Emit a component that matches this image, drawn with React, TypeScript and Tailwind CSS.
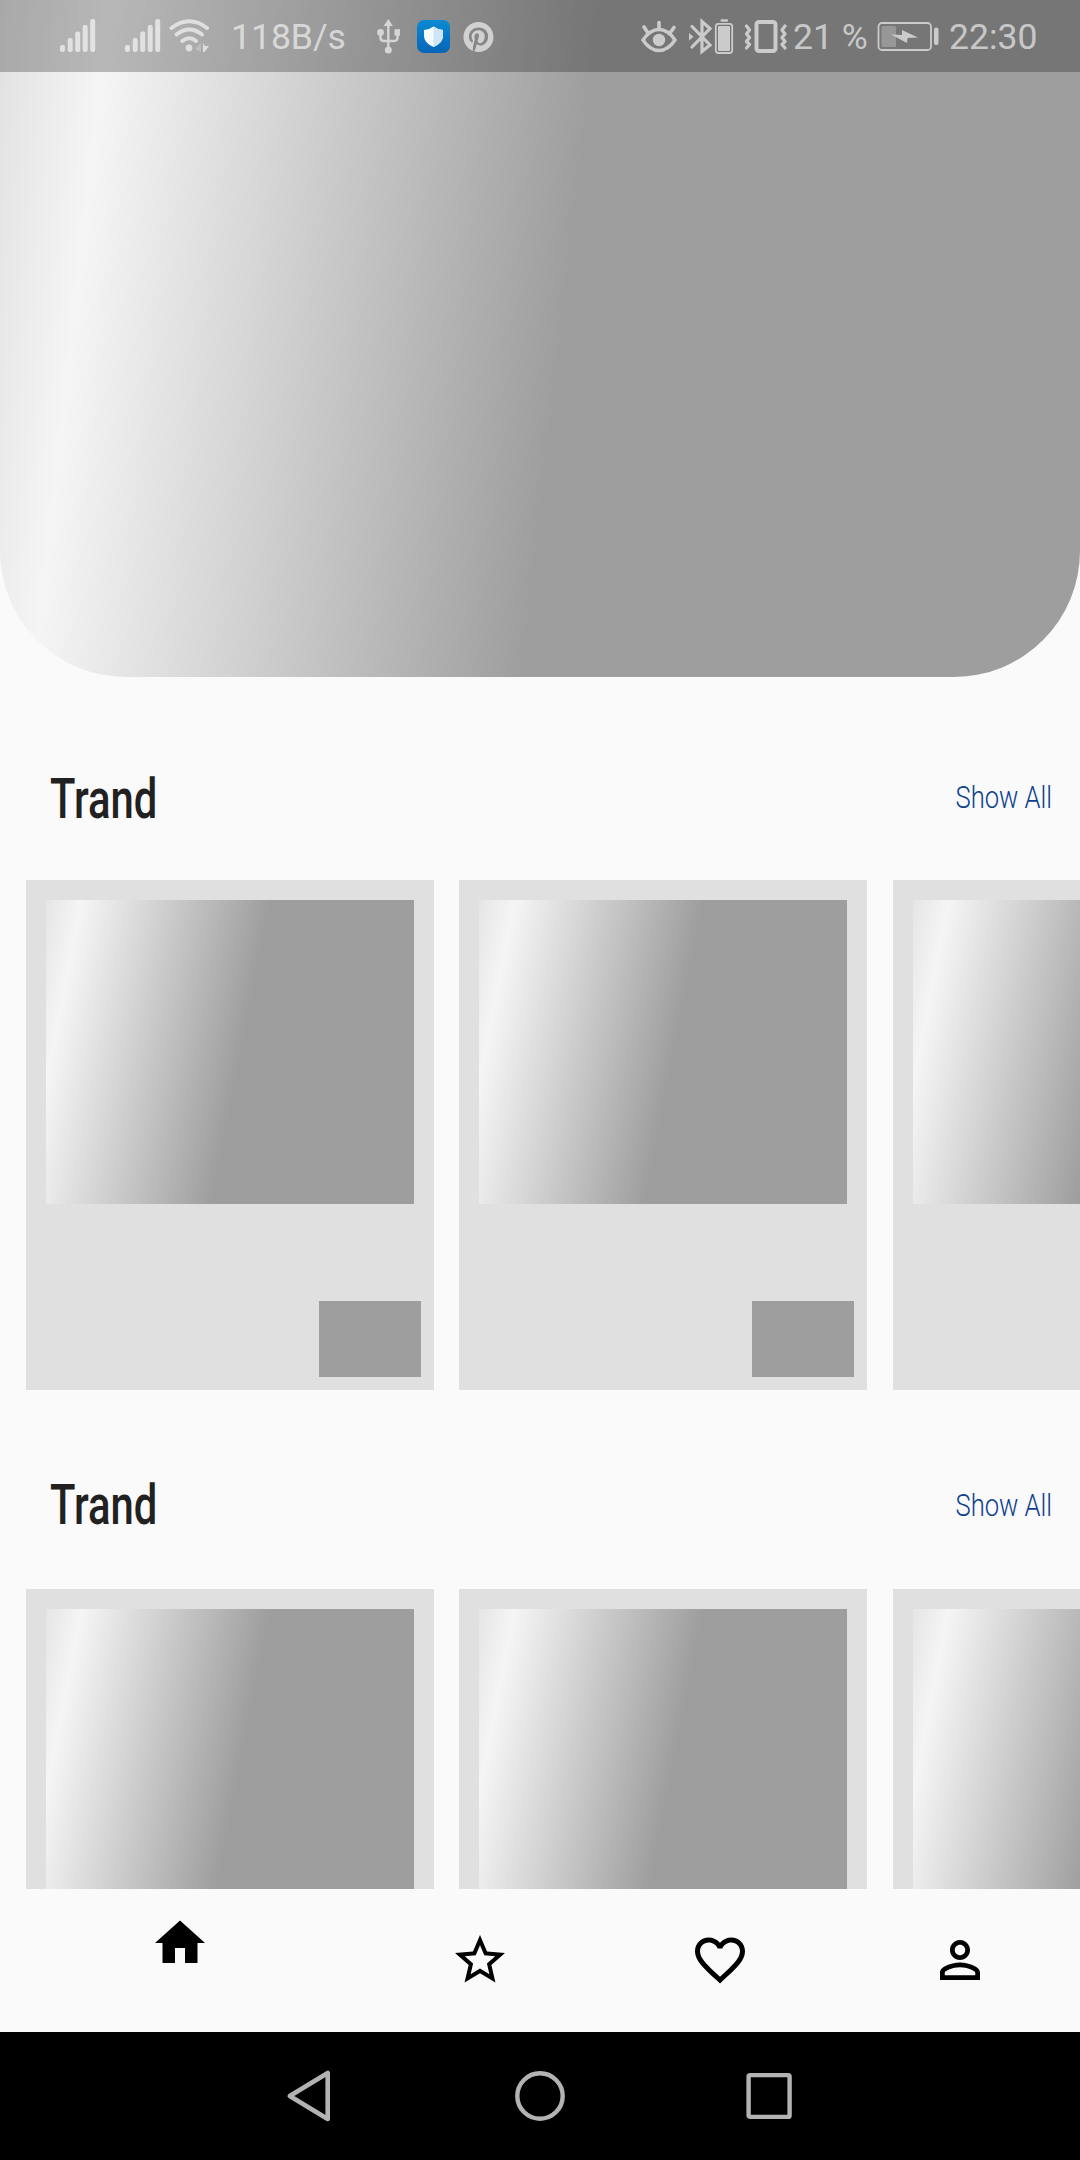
import React from "react";
import { FaPinterest } from "react-icons/fa";

type GlyphProps = { x: number; w: number; className?: string; children: React.ReactNode };

// Status bar glyph; children are drawn in the bar's own coordinate space.
function Glyph({ x, w, className = "", children }: GlyphProps) {
  return (
    <svg
      width={w}
      height={72}
      viewBox={`${x} 0 ${w} 72`}
      className={`block shrink-0 ${className}`}
      fill="none"
      stroke="none"
    >
      {children}
    </svg>
  );
}

function Signal({ className = "" }: { className?: string }) {
  return (
    <Glyph x={60} w={36} className={className}>
      <g fill="white">
        <rect x="60" y="45" width="5" height="7" rx="2" />
        <rect x="67.7" y="38" width="5" height="14" rx="2" />
        <rect x="75.2" y="31.5" width="5" height="20.5" rx="2" />
        <rect x="82.7" y="25" width="5" height="27" rx="2" />
        <rect x="90.2" y="19" width="5" height="33" rx="2" />
      </g>
    </Glyph>
  );
}

function StatusBar() {
  return (
    <div className="flex h-[72px] w-full items-center bg-black/25 font-['Roboto',sans-serif] text-[35.5px] leading-[72px] text-white/62">
      <Signal className="ml-[60px] opacity-62" />
      <Signal className="ml-[29px] opacity-62" />
      <Glyph x={168} w={44} className="ml-[7px] opacity-62">
        <g stroke="white" strokeWidth="4" strokeLinecap="round">
          <path d="M171.500 28Q189.300 14.500 207 28" />
          <path d="M176.500 34.500Q189.300 24.500 202 34.500" />
          <path d="M182.300 41Q189.300 35.500 196 41" />
        </g>
        <circle cx="189" cy="48" r="3.400" fill="white" />
        <path d="M201 42.500v9.500l-6-3z" fill="white" opacity=".35" />
        <path d="M203 43l2 3h4l-4.500 6H203z" fill="white" />
      </Glyph>
      <span className="ml-[19px] w-[145px] translate-y-px whitespace-nowrap">118B/s</span>
      <Glyph x={376} w={26} className="opacity-62">
        <g stroke="white" strokeWidth="2.400">
          <path d="M388.300 25V49M380.500 33V37.500Q380.500 41 384 41H393.500Q397.500 41 397.500 37.500V33" />
        </g>
        <g fill="white">
          <path d="M388.300 19l4.600 7h-9.200z" />
          <circle cx="388.300" cy="50" r="3.500" />
          <circle cx="380.500" cy="32.500" r="3.400" />
          <rect x="394.500" y="29.200" width="5.500" height="6.500" />
        </g>
      </Glyph>
      <Glyph x={417} w={33} className="ml-[15px]">
        <defs>
          <linearGradient id="tile" x1="0" y1="0" x2="0" y2="1">
            <stop offset="0" stopColor="#0a8ad2" />
            <stop offset="1" stopColor="#0765b8" />
          </linearGradient>
        </defs>
        <rect x="417" y="20" width="33" height="33" rx="7" fill="url(#tile)" />
        <path d="M433.500 26.500q4 3 9.500 3.500v6q0 7-9.500 11-9.500-4-9.500-11v-6q5.500-.5 9.500-3.500z" fill="#f4fafe" />
        <path d="M433.500 26.500q4 3 9.500 3.500v6q0 7-9.500 11z" fill="#cfe5f5" />
      </Glyph>
      <FaPinterest className="ml-[13px] size-[31px] shrink-0 translate-y-[0.500px]" />

      <Glyph x={640} w={38} className="ml-[146px] opacity-62">
        <g stroke="white" strokeLinecap="round">
          <path d="M643 40Q650 29.500 659 29.500T675 40Q668 50.500 659 50.500T643 40Z" strokeWidth="3.400" />
          <path d="M659 22.500V29M644 27l4 6M674 27.500l-4 5.500" strokeWidth="3.600" />
        </g>
        <circle cx="659" cy="40" r="6.200" fill="white" />
      </Glyph>
      <Glyph x={688} w={46} className="ml-[10px] opacity-62">
        <path d="M692 26.500L710 45L702 51.500V21.500L710 28.500L692 47" stroke="white" strokeWidth="3.200" strokeLinecap="round" />
        <path d="M689 33l4.500 3.700-4.500 3.700z" fill="white" />
        <rect x="715.800" y="23.800" width="16.400" height="29.200" rx="2.500" stroke="white" strokeWidth="1.800" />
        <rect x="718" y="26" width="12" height="25" rx="1" fill="white" />
        <rect x="720.500" y="19.300" width="7.500" height="2.400" rx="1" fill="white" />
      </Glyph>
      <Glyph x={744} w={44} className="ml-[10px] opacity-62">
        <rect x="756.500" y="22" width="19" height="29" rx="2.500" stroke="white" strokeWidth="4" />
        <path d="M746.500 26l3 4-3 4 3 3.500-3 4 3 3-3 3.500M785 26l-3 4 3 4-3 3.500 3 4-3 3 3 3.500" stroke="white" strokeWidth="3.200" strokeLinecap="round" strokeLinejoin="round" />
      </Glyph>
      <span className="ml-[5px] w-[84px] translate-y-px whitespace-nowrap">21 %</span>
      <Glyph x={877} w={62} className="opacity-62">
        <rect x="878.500" y="23" width="52.500" height="27" rx="3.500" stroke="white" strokeWidth="1.800" />
        <rect x="881.500" y="26" width="14.500" height="21" rx="1.500" fill="white" opacity=".4" />
        <path d="M891 34.500l11 .5V30l16 7.500-10.500.5-.5 5z" fill="white" />
        <rect x="934" y="27.500" width="4.500" height="17.500" rx="2" fill="white" />
      </Glyph>
      <span className="ml-[10px] translate-y-px whitespace-nowrap">22:30</span>
    </div>
  );
}

function Card() {
  return (
    <div className="flex h-[510px] w-[408px] shrink-0 flex-col justify-between bg-[#e0e0e0]">
      <div className="mx-[20px] mt-[20px] h-[304px] bg-[linear-gradient(101deg,#e5e5e5_0px,#f5f5f5_35px,#9e9e9e_220px)]" />
      <div className="mr-[13px] mb-[13px] h-[76px] w-[102px] self-end bg-[#9e9e9e]" />
    </div>
  );
}

function Section({ headClass, linkClass }: { headClass: string; linkClass: string }) {
  return (
    <section>
      <div className={`flex items-center justify-between pr-[28px] pl-[50px] ${headClass}`}>
        <h2 className="origin-left scale-x-[0.760] font-['Roboto',sans-serif] text-[55px] leading-[64px] font-medium text-[#212121]">
          Trand
        </h2>
        <a
          className={`origin-right scale-x-[0.825] font-['Roboto',sans-serif] text-[31px] leading-[36px] font-light text-[#0d3f90] ${linkClass}`}
        >
          Show All
        </a>
      </div>
      <div className="flex gap-[25.400px] overflow-hidden pl-[26px]">
        <Card />
        <Card />
        <Card />
      </div>
    </section>
  );
}

const tabs = [
  {
    name: "Home",
    cell: "w-[360px] pt-[24px]",
    path: "M10 20v-6h4v6h5v-8h3L12 3 2 12h3v8z",
  },
  {
    name: "Starred",
    cell: "w-[240px] pt-[41px]",
    path: "M22 9.240l-7.190-.62L12 2 9.190 8.630 2 9.240l5.460 4.730L5.820 21 12 17.270 18.180 21l-1.630-7.030L22 9.240zM12 15.400l-3.760 2.270 1-4.280-3.320-2.880 4.380-.38L12 6.100l1.710 4.040 4.380.38-3.320 2.880 1 4.280L12 15.400z",
  },
  {
    name: "Favorites",
    cell: "w-[240px] pt-[41px]",
    path: "M16.500 3c-1.740 0-3.410.81-4.500 2.090C10.910 3.810 9.240 3 7.500 3 4.420 3 2 5.420 2 8.500c0 3.780 3.400 6.860 8.550 11.540L12 21.350l1.450-1.320C18.600 15.360 22 12.280 22 8.500 22 5.420 19.580 3 16.500 3zm-4.400 15.550l-.1.100-.1-.1C7.140 14.240 4 11.390 4 8.500 4 6.500 5.500 5 7.500 5c1.540 0 3.040.99 3.570 2.360h1.870C13.460 5.990 14.960 5 16.500 5c2 0 3.500 1.500 3.500 3.500 0 2.890-3.140 5.740-7.900 10.050z",
  },
  {
    name: "Profile",
    cell: "w-[240px] pt-[41px]",
    path: "M12 5.900c1.160 0 2.100.94 2.100 2.100s-.94 2.100-2.100 2.100S9.900 9.160 9.900 8s.94-2.100 2.100-2.100m0 9c2.970 0 6.100 1.460 6.100 2.100v1.100H5.900V17c0-.64 3.130-2.100 6.100-2.100M12 4C9.790 4 8 5.790 8 8s1.790 4 4 4 4-1.790 4-4-1.790-4-4-4zm0 9c-2.670 0-8 1.340-8 4v3h16v-3c0-2.660-5.330-4-8-4z",
  },
];

export default function App() {
  return (
    <div className="flex h-[2160px] w-[1080px] flex-col overflow-hidden bg-[#fafafa]">
      <main className="h-[1889px] overflow-hidden">
        <header className="h-[677px] rounded-b-[126px] bg-[linear-gradient(96.450deg,#e1e1e1_0px,#f5f5f5_110px,#9e9e9e_596px)]">
          <StatusBar />
        </header>
        <Section headClass="h-[203px] pt-[40px]" linkClass="mb-[2px]" />
        <Section headClass="h-[199px] pt-[30px]" linkClass="mt-[2px]" />
      </main>

      <nav className="flex h-[143px] shrink-0 bg-[#fafafa]">
        {tabs.map((tab) => (
          <button key={tab.name} aria-label={tab.name} className={`flex items-start justify-center ${tab.cell}`}>
            <svg viewBox="0 0 24 24" className="size-[60px] fill-black">
              <path d={tab.path} />
            </svg>
          </button>
        ))}
      </nav>

      <footer className="flex h-[128px] shrink-0 items-center justify-between bg-black px-[286px]">
        <svg width="50" height="56" viewBox="0 0 50 56" fill="none" stroke="#b3b3b3" strokeWidth="4.600" strokeLinejoin="round">
          <path d="M3.800 28L41.700 5V51Z" />
        </svg>
        <svg width="56" height="56" viewBox="0 0 56 56" fill="none" stroke="#b3b3b3" strokeWidth="4.400">
          <circle cx="28" cy="28" r="22.700" />
        </svg>
        <svg width="50" height="56" viewBox="0 0 50 56" fill="none" stroke="#b3b3b3" strokeWidth="4.400">
          <rect x="4.600" y="7.100" width="41" height="41.800" rx="1.500" />
        </svg>
      </footer>
    </div>
  );
}
